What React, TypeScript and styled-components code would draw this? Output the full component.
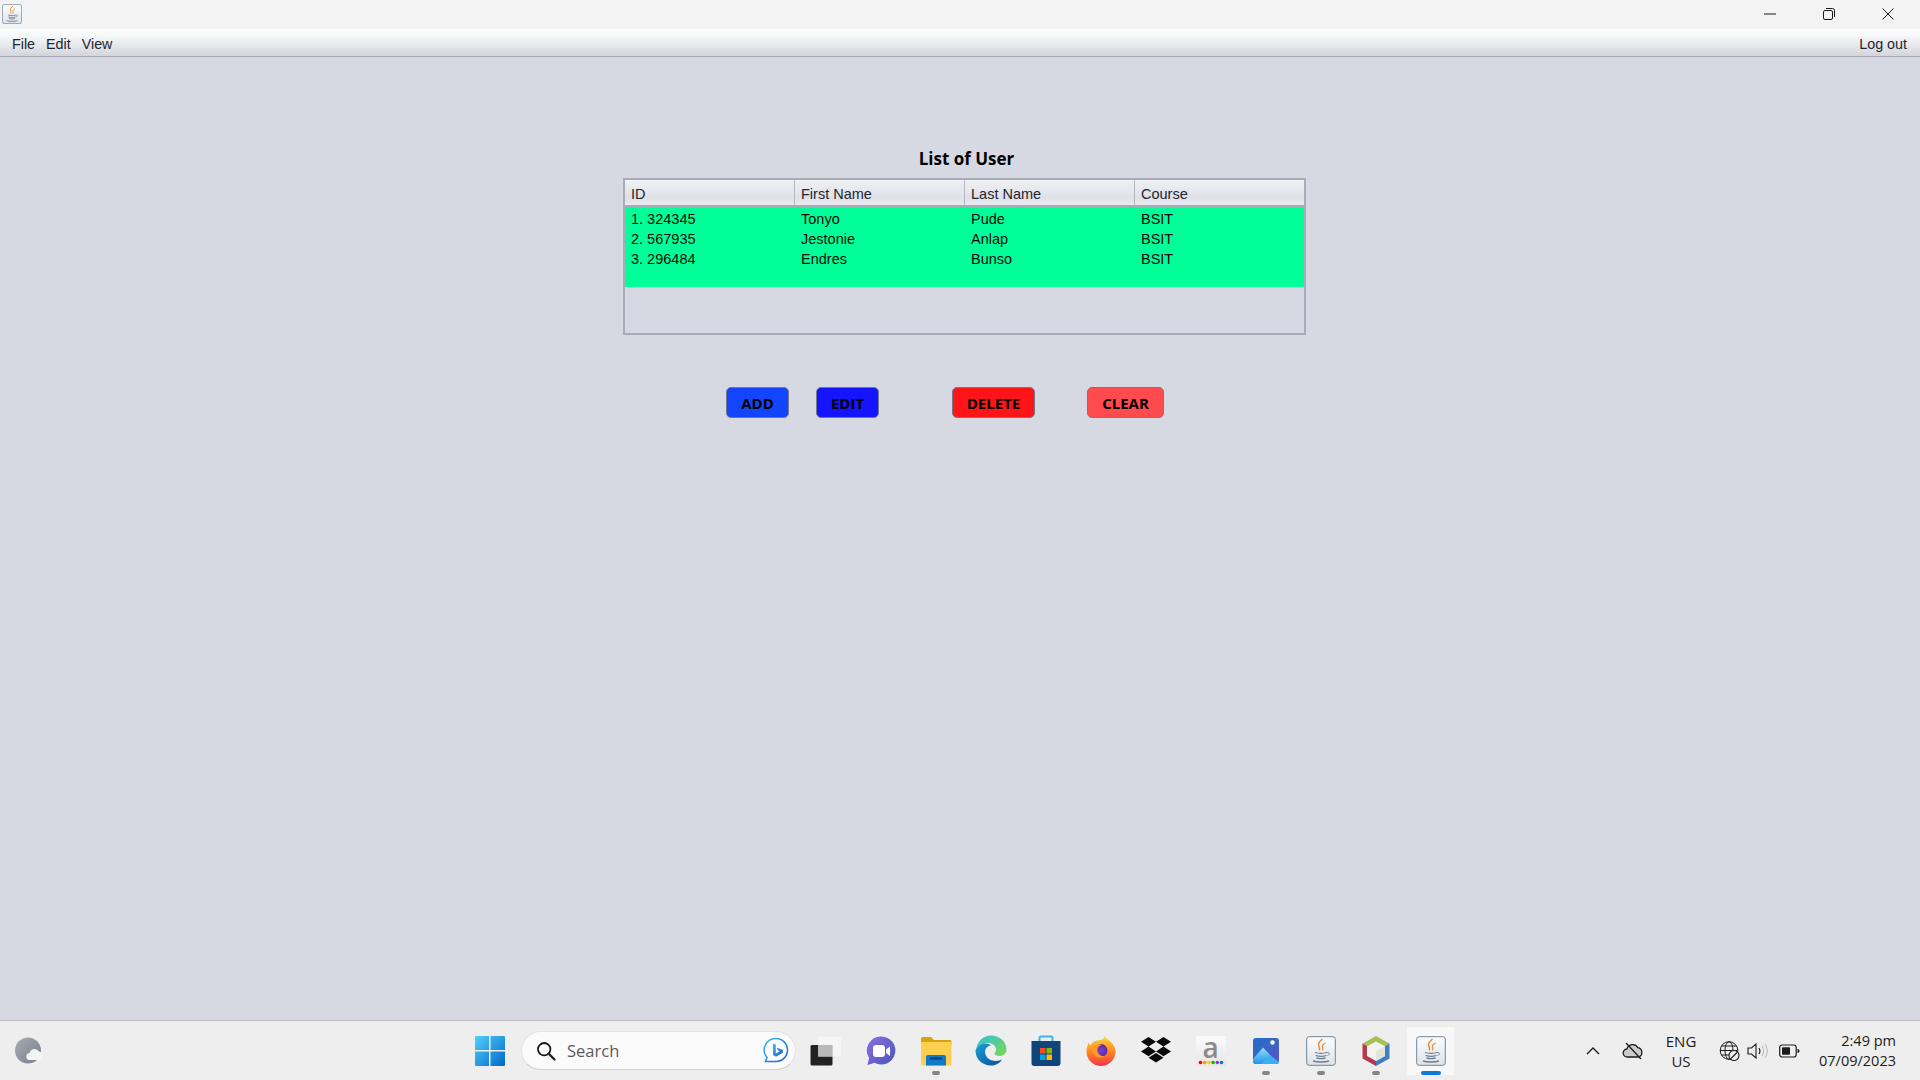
import React from "react";
import styled, { createGlobalStyle } from "styled-components";

const GlobalStyle = createGlobalStyle`
  html, body {
    margin: 0;
    padding: 0;
    height: 100%;
    overflow: hidden;
    background: #d6d9e2;
  }
  * { box-sizing: border-box; }
  #root { height: 100%; }
`;

const users = [
  { id: "1. 324345", first: "Tonyo", last: "Pude", course: "BSIT" },
  { id: "2. 567935", first: "Jestonie", last: "Anlap", course: "BSIT" },
  { id: "3. 296484", first: "Endres", last: "Bunso", course: "BSIT" },
];

const JavaIcon = ({ size }: { size: number }) => (
  <svg width={size} height={size} viewBox="0 0 30 30">
    <defs>
      <linearGradient id={`javabg${size}`} x1="0" y1="0" x2="0" y2="1">
        <stop offset="0" stopColor="#fbfcfd" />
        <stop offset="1" stopColor="#dfe3e8" />
      </linearGradient>
    </defs>
    <rect x="0.7" y="0.7" width="28.6" height="28.6" rx="2.5" fill={`url(#javabg${size})`} stroke="#6f8496" strokeWidth="1" />
    <path d="M16.5 3c-3 3-5 4.500-3.500 7.500.6 1.300 1 2.500.2 3.800" fill="none" stroke="#e98a3a" strokeWidth="1.500" />
    <path d="M19.500 7c-2.500 1.500-4 3-2.800 5 .5 1 .4 1.500-.2 2.300" fill="none" stroke="#e98a3a" strokeWidth="1.200" />
    <path d="M9 16.500c3 1 9 1 12 0M9.500 19.500c3 .9 8 .9 11 0M10.500 22c2.500.7 6.500.7 9 0" fill="none" stroke="#6d7f91" strokeWidth="1.300" />
    <path d="M21 16.500c2.500-.8 3.500 1.800.5 3" fill="none" stroke="#6d7f91" strokeWidth="1" />
    <path d="M7 25c4 1.400 12 1.400 16 0" fill="none" stroke="#6d7f91" strokeWidth="1.400" />
  </svg>
);

const StartIcon = () => (
  <svg width="30" height="30" viewBox="0 0 30 30">
    <defs>
      <linearGradient id="startbg" x1="0" y1="0" x2="1" y2="1">
        <stop offset="0" stopColor="#53cffb" />
        <stop offset="1" stopColor="#0068c8" />
      </linearGradient>
    </defs>
    <path d="M1 0h13v14H0V1a1 1 0 0 1 1-1zM15.500 0H29a1 1 0 0 1 1 1v13H15.500zM0 15.500h14V30H1a1 1 0 0 1-1-1zM15.500 15.500H30V29a1 1 0 0 1-1 1H15.500z" fill="url(#startbg)" />
  </svg>
);

const SearchIcon = () => (
  <svg width="20" height="20" viewBox="0 0 20 20">
    <circle cx="8.200" cy="8.200" r="6.200" fill="none" stroke="#1c1c1c" strokeWidth="1.800" />
    <path d="M12.800 12.800 18.500 18.500" stroke="#1c1c1c" strokeWidth="2.200" strokeLinecap="round" />
  </svg>
);

const BingIcon = () => (
  <svg width="26" height="28" viewBox="0 0 26 28">
    <defs>
      <linearGradient id="bingring" x1="0" y1="0" x2="1" y2="1">
        <stop offset="0" stopColor="#35c1f1" />
        <stop offset="1" stopColor="#1b57d6" />
      </linearGradient>
    </defs>
    <path d="M13 1.500a11.500 11.500 0 0 1 0 23H2.500l1.500-4A11.500 11.500 0 0 1 13 1.500z" fill="#fff" stroke="url(#bingring)" strokeWidth="1.500" />
    <path d="M10 6.500l2.800 1v9l4-2.300-2-1-1-2.500 6 2.100v3l-6.800 4-3-1.800z" fill="url(#bingring)" />
  </svg>
);

const TaskViewIcon = () => (
  <svg width="32" height="30" viewBox="0 0 32 30">
    <rect x="0.500" y="9" width="22" height="20.500" rx="1.500" fill="#222" />
    <rect x="8" y="0.500" width="23" height="20" rx="1" fill="#f7f7f7" fillOpacity="0.85" />
    <rect x="8" y="9" width="14.500" height="11.500" fill="#b9b9b9" />
  </svg>
);

const ChatIcon = () => (
  <svg width="30" height="30" viewBox="0 0 30 30">
    <defs>
      <linearGradient id="chatbg" x1="0" y1="0" x2="1" y2="1">
        <stop offset="0" stopColor="#8a6fe0" />
        <stop offset="1" stopColor="#4d54bd" />
      </linearGradient>
    </defs>
    <path d="M15.500 0.500a14 14 0 1 1-7 26.200L1.500 29l1.600-7A14 14 0 0 1 15.500.500z" fill="url(#chatbg)" />
    <rect x="7" y="9" width="12" height="12" rx="3" fill="#fff" />
    <path d="M20 13.500l4-3v9.500l-4-3z" fill="#fff" />
  </svg>
);

const ExplorerIcon = () => (
  <svg width="32" height="30" viewBox="0 0 32 30">
    <path d="M1 3a2 2 0 0 1 2-2h8l3 3h16a1.500 1.500 0 0 1 1.500 1.500V9H1z" fill="#d9a20c" />
    <path d="M1 6h30.500v22a1.500 1.500 0 0 1-1.500 1.500H3A2 2 0 0 1 1 27.500z" fill="#fdcf4f" />
    <path d="M6 21a2 2 0 0 1 2-2h16a2 2 0 0 1 2 2v8.500H6z" fill="#0d79c9" />
    <rect x="10" y="21.500" width="12" height="2" fill="#0b3f78" />
  </svg>
);

const EdgeIcon = () => (
  <svg width="32" height="32" viewBox="0 0 32 32">
    <defs>
      <linearGradient id="edgea" x1="0" y1="0" x2="1" y2="1">
        <stop offset="0" stopColor="#30c0e0" />
        <stop offset="1" stopColor="#7ed84f" />
      </linearGradient>
      <linearGradient id="edgeb" x1="0" y1="0" x2="1" y2="1">
        <stop offset="0" stopColor="#1aa0d8" />
        <stop offset="1" stopColor="#0a4f9c" />
      </linearGradient>
    </defs>
    <path d="M16 .500c9 0 15.500 6.500 15.500 14 0 4-3 6.500-7 6.500-3 0-5-1-5-2.500 0-1 1.500-1.200 1.500-4 0-4-4-6.500-8-6.500-5 0-9 3-12 7C2 7 7.500.500 16 .500z" fill="url(#edgea)" />
    <path d="M.500 15.500c2-4.500 6-7 10-7 3.500 0 5.500 2 5.500 2-4 .5-6 3.500-6 6.500 0 5 5 9 10.500 9 3 0 5-1 6.500-1.500-2.500 4-7 6-11 6C7 30.500.500 24 .500 15.500z" fill="url(#edgeb)" />
  </svg>
);

const StoreIcon = () => (
  <svg width="30" height="32" viewBox="0 0 30 32">
    <path d="M8.500 6V3a1.500 1.500 0 0 1 1.500-1.500h10A1.500 1.500 0 0 1 21.500 3v3" fill="none" stroke="#3fb4ea" strokeWidth="2" />
    <path d="M0.500 6h29v22a3 3 0 0 1-3 3h-23a3 3 0 0 1-3-3z" fill="#10457c" />
    <rect x="9" y="13" width="5.500" height="5.500" fill="#f25022" />
    <rect x="15.500" y="13" width="5.500" height="5.500" fill="#7fba00" />
    <rect x="9" y="19.500" width="5.500" height="5.500" fill="#00a4ef" />
    <rect x="15.500" y="19.500" width="5.500" height="5.500" fill="#ffb900" />
  </svg>
);

const FirefoxIcon = () => (
  <svg width="30" height="30" viewBox="0 0 30 30">
    <defs>
      <linearGradient id="foxa" x1="0" y1="0" x2="0" y2="1">
        <stop offset="0" stopColor="#ffd83a" />
        <stop offset="0.500" stopColor="#ff8a1f" />
        <stop offset="1" stopColor="#f0364f" />
      </linearGradient>
      <radialGradient id="foxb">
        <stop offset="0" stopColor="#7c3fd0" />
        <stop offset="1" stopColor="#5a2aa8" />
      </radialGradient>
    </defs>
    <path d="M19 0c1 3 4 4 6 6 3 3 4.500 7 4.500 9.500a14.500 14.500 0 0 1-29 0C.500 12 1.500 9 3 6.500c.3 1.500.8 2.300 1.500 3C6 6 9 4.500 12 4.500 14.500 4.500 18 3 19 0z" fill="url(#foxa)" />
    <circle cx="15" cy="14.500" r="6.500" fill="url(#foxb)" />
    <path d="M7 11c3-3 7-3.500 9-2 -3 .5-5 2.500-4.500 6 .5 3 3.500 5.500 7 5-3 2.500-8 2-10.500-1.500C6 15.500 6 13 7 11z" fill="#ff9a24" />
  </svg>
);

const DropboxIcon = () => (
  <svg width="30" height="28" viewBox="0 0 30 28">
    <path d="M7.500 0 15 4.800 7.500 9.600 0 4.800zM22.500 0 30 4.800l-7.500 4.800L15 4.800zM0 14.400l7.500-4.800 7.500 4.800-7.500 4.800zM22.500 9.600l7.500 4.800-7.500 4.800-7.500-4.800zM7.500 20.800l7.500-4.800 7.500 4.800L15 25.600z" fill="#0a0a0a" />
  </svg>
);

const AmazonIcon = () => (
  <AmazonTile>
    <AmazonLetter>a</AmazonLetter>
    <svg width="26" height="5" viewBox="0 0 26 5">
      {["#f00", "#f90", "#fc0", "#0b0", "#93c", "#07e"].map((fill, i) => (
        <circle key={fill} cx={2.5 + i * 4.2} cy="2.500" r="1.800" fill={fill} />
      ))}
    </svg>
  </AmazonTile>
);

const PhotosIcon = () => (
  <svg width="26" height="26" viewBox="0 0 26 26">
    <defs>
      <linearGradient id="photobg" x1="0" y1="0" x2="1" y2="1">
        <stop offset="0" stopColor="#1f6fc4" />
        <stop offset="1" stopColor="#5a55c8" />
      </linearGradient>
      <linearGradient id="photomt" x1="0" y1="0" x2="0" y2="1">
        <stop offset="0" stopColor="#8fe0f8" />
        <stop offset="1" stopColor="#1e96e8" />
      </linearGradient>
    </defs>
    <rect width="26" height="26" rx="3" fill="url(#photobg)" />
    <circle cx="19.500" cy="4.500" r="2.200" fill="#fff" />
    <path d="M0 21 10 9.500 22 22a2 2 0 0 1 0 4H3a3 3 0 0 1-3-3z" fill="url(#photomt)" />
    <path d="M8 26 17 17.500 26 24a2.500 2.500 0 0 1-3 2z" fill="#3bb0ee" />
  </svg>
);

const NetbeansIcon = () => (
  <svg width="28" height="30" viewBox="0 0 28 30">
    <path d="M14 0 27.500 7.500 14 15 .500 7.500z" fill="#a4c15a" />
    <path d="M.500 7.500 14 15v15L.500 22.500z" fill="#b33a50" />
    <path d="M27.500 7.500 14 15v15l13.500-7.500z" fill="#3f7fc2" />
    <path d="M14 5.500 23 10.200v9.800L14 25l-9-5v-9.800z" fill="#f4f4ee" />
    <path d="M14 15 23 10.200v9.800L14 25z" fill="#dfe5da" />
  </svg>
);

const WeatherIcon = () => (
  <svg width="30" height="28" viewBox="0 0 30 28">
    <defs>
      <linearGradient id="moon" x1="0" y1="0" x2="1" y2="1">
        <stop offset="0" stopColor="#a7adb4" />
        <stop offset="1" stopColor="#777e88" />
      </linearGradient>
    </defs>
    <circle cx="14" cy="13.500" r="13" fill="url(#moon)" />
    <path d="M16 23a3.500 3.500 0 0 1-.3-7 5 5 0 0 1 9.300-1.500A4.300 4.300 0 0 1 25 23z" fill="#f2f4f6" />
  </svg>
);

const CloudOffIcon = () => (
  <svg width="22" height="18" viewBox="0 0 22 18">
    <path d="M5.500 15a4 4 0 0 1-.6-8 6 6 0 0 1 11-1.300A4.800 4.800 0 0 1 16.500 15z" fill="#8b8b8b" fillOpacity="0.35" stroke="#1c1c1c" strokeWidth="1.300" />
    <path d="M4 1 19 17" stroke="#1c1c1c" strokeWidth="1.300" />
  </svg>
);

const GlobeIcon = () => (
  <svg width="21" height="20" viewBox="0 0 21 20">
    <circle cx="10" cy="9.500" r="8.800" fill="none" stroke="#1c1c1c" strokeWidth="1" />
    <ellipse cx="10" cy="9.500" rx="4" ry="8.800" fill="none" stroke="#1c1c1c" strokeWidth="1" />
    <path d="M1.200 9.500h17.600M2.500 5h15M2.500 14h15" stroke="#1c1c1c" strokeWidth="1" />
    <circle cx="15" cy="14.500" r="5" fill="#eeeeee" stroke="#1c1c1c" strokeWidth="1.100" />
    <path d="M12 17.500 18 11.500" stroke="#1c1c1c" strokeWidth="1.100" />
  </svg>
);

const VolumeIcon = () => (
  <svg width="21" height="18" viewBox="0 0 21 18">
    <path d="M1 6h3.500L9 2v14l-4.500-4H1z" fill="none" stroke="#1c1c1c" strokeWidth="1.100" />
    <path d="M12 6c1.200 1.800 1.200 4.200 0 6" fill="none" stroke="#1c1c1c" strokeWidth="1.100" />
    <path d="M15 4c2 3 2 7 0 10M18 2c3 4 3 10 0 14" fill="none" stroke="#bbbbbb" strokeWidth="1.100" />
  </svg>
);

const BatteryIcon = () => (
  <svg width="21" height="14" viewBox="0 0 21 14">
    <rect x="0.700" y="1" width="16.500" height="12" rx="2.500" fill="none" stroke="#1c1c1c" strokeWidth="1.200" />
    <rect x="3" y="3.300" width="8" height="7.400" rx="0.800" fill="#1c1c1c" />
    <path d="M18.500 5v4c1.200 0 2-.8 2-2s-.8-2-2-2z" fill="#1c1c1c" />
  </svg>
);

const App = () => {
  return (
    <Screen>
      <GlobalStyle />
      <TitleBar>
        <AppIconBox>
          <JavaIcon size={20} />
        </AppIconBox>
        <WindowControls>
          <WindowButton>
            <svg width="12" height="12" viewBox="0 0 12 12">
              <path d="M0 6h12" stroke="#1a1a1a" strokeWidth="1" />
            </svg>
          </WindowButton>
          <WindowButton>
            <svg width="12" height="12" viewBox="0 0 12 12">
              <rect x="0.500" y="2.500" width="9" height="9" rx="1.500" fill="none" stroke="#1a1a1a" strokeWidth="1" />
              <path d="M3 .500h6.500a2 2 0 0 1 2 2V9" fill="none" stroke="#1a1a1a" strokeWidth="1" />
            </svg>
          </WindowButton>
          <WindowButton>
            <svg width="12" height="12" viewBox="0 0 12 12">
              <path d="M.500.500l11 11M11.500.500l-11 11" stroke="#1a1a1a" strokeWidth="1" />
            </svg>
          </WindowButton>
        </WindowControls>
      </TitleBar>

      <MenuBar>
        <MenuGroup>
          <MenuItem>File</MenuItem>
          <MenuItem>Edit</MenuItem>
          <MenuItem>View</MenuItem>
        </MenuGroup>
        <MenuItem>Log out</MenuItem>
      </MenuBar>

      <Content>
        <Title>List of User</Title>
        <TablePane>
          <HeaderRow>
            <HeaderCell>ID</HeaderCell>
            <HeaderCell>First Name</HeaderCell>
            <HeaderCell>Last Name</HeaderCell>
            <HeaderCell>Course</HeaderCell>
          </HeaderRow>
          <Rows>
            {users.map((user) => (
              <Row key={user.id}>
                <Cell>{user.id}</Cell>
                <Cell>{user.first}</Cell>
                <Cell>{user.last}</Cell>
                <Cell>{user.course}</Cell>
              </Row>
            ))}
          </Rows>
        </TablePane>
        <Actions>
          <ActionButton $bg="#1345ff" $width={63} $before={0}>ADD</ActionButton>
          <ActionButton $bg="#1414ff" $width={63} $before={27}>EDIT</ActionButton>
          <ActionButton $bg="#ff1418" $width={83} $before={73}>DELETE</ActionButton>
          <ActionButton $bg="#ff4a4e" $width={77} $before={52}>CLEAR</ActionButton>
        </Actions>
      </Content>

      <Taskbar>
        <WeatherSlot>
          <WeatherIcon />
        </WeatherSlot>
        <TaskCenter>
          <TaskSlot>
            <StartIcon />
          </TaskSlot>
          <SearchBox>
            <SearchIcon />
            <SearchText>Search</SearchText>
            <BingIcon />
          </SearchBox>
          <TaskSlot>
            <TaskViewIcon />
          </TaskSlot>
          <TaskSlot>
            <ChatIcon />
          </TaskSlot>
          <TaskSlot $running>
            <ExplorerIcon />
          </TaskSlot>
          <TaskSlot>
            <EdgeIcon />
          </TaskSlot>
          <TaskSlot>
            <StoreIcon />
          </TaskSlot>
          <TaskSlot>
            <FirefoxIcon />
          </TaskSlot>
          <TaskSlot>
            <DropboxIcon />
          </TaskSlot>
          <TaskSlot>
            <AmazonIcon />
          </TaskSlot>
          <TaskSlot $running>
            <PhotosIcon />
          </TaskSlot>
          <TaskSlot $running>
            <JavaIcon size={30} />
          </TaskSlot>
          <TaskSlot $running>
            <NetbeansIcon />
          </TaskSlot>
          <TaskSlot $active>
            <JavaIcon size={30} />
          </TaskSlot>
        </TaskCenter>
        <Tray>
          <TrayIconBox $width={56}>
            <svg width="14" height="8" viewBox="0 0 14 8">
              <path d="M1 7l6-6 6 6" fill="none" stroke="#1c1c1c" strokeWidth="1.400" />
            </svg>
          </TrayIconBox>
          <TrayIconBox $width={24}>
            <CloudOffIcon />
          </TrayIconBox>
          <Lang>
            <span>ENG</span>
            <span>US</span>
          </Lang>
          <TrayIconBox $width={24}>
            <GlobeIcon />
          </TrayIconBox>
          <TrayIconBox $width={32}>
            <VolumeIcon />
          </TrayIconBox>
          <TrayIconBox $width={32}>
            <BatteryIcon />
          </TrayIconBox>
          <Clock>
            <span>2:49 pm</span>
            <span>07/09/2023</span>
          </Clock>
        </Tray>
      </Taskbar>
    </Screen>
  );
};

const Screen = styled.div`
  width: 1920px;
  height: 1080px;
  display: flex;
  flex-direction: column;
  background: #d6d9e2;
  font-family: "Liberation Sans", Arial, sans-serif;
`;

const TitleBar = styled.div`
  height: 29px;
  flex-shrink: 0;
  display: flex;
  align-items: flex-start;
  justify-content: space-between;
  background: #f3f3f3;
`;

const AppIconBox = styled.div`
  display: flex;
  padding: 4px 0 0 2px;
`;

const WindowControls = styled.div`
  display: flex;
  padding-right: 3px;
`;

const WindowButton = styled.div`
  width: 59px;
  height: 29px;
  display: flex;
  align-items: center;
  justify-content: center;
  padding-bottom: 2px;
`;

const MenuBar = styled.div`
  height: 28px;
  flex-shrink: 0;
  display: flex;
  align-items: center;
  justify-content: space-between;
  padding: 2px 13px 0 12px;
  background: linear-gradient(#fdfdfe 0%, #f7f8f9 25%, #d3d5db 100%);
  border-bottom: 1px solid #a8abb6;
`;

const MenuGroup = styled.div`
  display: flex;
  gap: 11px;
`;

const MenuItem = styled.span`
  font-size: 14.3px;
  color: #1d2530;
`;

const Content = styled.main`
  flex: 1;
  display: flex;
  flex-direction: column;
  align-items: center;
  padding: 89px 0 0 9px;
`;

const Title = styled.h1`
  margin: 0 0 7px 4px;
  height: 25px;
  line-height: 25px;
  font-family: "Open Sans", sans-serif;
  font-size: 17px;
  font-weight: 700;
  color: #000;
`;

const TablePane = styled.div`
  width: 683px;
  height: 157px;
  border: 2px solid #a9acb7;
  background: #d6d9e2;
`;

const HeaderRow = styled.div`
  height: 27px;
  display: grid;
  grid-template-columns: repeat(4, 170px);
  background: linear-gradient(#f0f1f4 0%, #dfe1e7 70%, #e9ebf1 100%);
  border-bottom: 2px solid #a9acb7;
`;

const HeaderCell = styled.div`
  padding: 5px 0 0 6px;
  font-size: 14.5px;
  line-height: 18px;
  color: #1d2530;
  border-right: 1px solid #b4b7c1;

  &:last-child {
    border-right: 0;
  }
`;

const Rows = styled.div`
  height: 80px;
  padding-top: 2px;
  background: #00ff99;
`;

const Row = styled.div`
  height: 20px;
  display: grid;
  grid-template-columns: repeat(4, 170px);
`;

const Cell = styled.div`
  padding-left: 6px;
  font-size: 14.5px;
  line-height: 20px;
  color: #0a0a0a;
`;

const Actions = styled.div`
  width: 683px;
  display: flex;
  padding: 52px 0 0 103px;
`;

const ActionButton = styled.button<{ $bg: string; $width: number; $before: number }>`
  width: ${(p) => p.$width}px;
  height: 31px;
  margin-left: ${(p) => p.$before}px;
  padding: 0;
  border: 1px solid #73778a;
  border-radius: 5px;
  background: ${(p) => p.$bg};
  font-family: "Open Sans", sans-serif;
  font-size: 15px;
  font-weight: 700;
  color: #000;
`;

const Taskbar = styled.footer`
  height: 60px;
  flex-shrink: 0;
  display: grid;
  grid-template-columns: 462px 1fr auto;
  align-items: center;
  background: #eeeeee;
  border-top: 1px solid #bdbdbd;
`;

const WeatherSlot = styled.div`
  display: flex;
  padding-left: 14px;
  align-items: center;
`;

const TaskCenter = styled.div`
  display: flex;
  align-items: center;
`;

const TaskSlot = styled.div<{ $running?: boolean; $active?: boolean }>`
  position: relative;
  width: 55px;
  height: 48px;
  padding: 0 4px;
  display: flex;
  align-items: center;
  justify-content: center;
  border-radius: 4px;
  background: ${(p) => (p.$active ? "#f8f8f8" : "transparent")};
  background-clip: content-box;

  &::after {
    content: "";
    display: ${(p) => (p.$running || p.$active ? "block" : "none")};
    position: absolute;
    bottom: 0;
    left: 50%;
    width: ${(p) => (p.$active ? "20px" : "8px")};
    height: 4px;
    margin-left: ${(p) => (p.$active ? "-10px" : "-4px")};
    border-radius: 2px;
    background: ${(p) => (p.$active ? "#0a78d4" : "#868686")};
  }
`;

const SearchBox = styled.div`
  width: 275px;
  height: 39px;
  margin: 0 2px 0 4px;
  display: flex;
  align-items: center;
  padding: 0 6px 0 14px;
  background: #fbfbfb;
  border: 1px solid #e2e2e2;
  border-bottom-color: #cfcfcf;
  border-radius: 20px;
`;

const SearchText = styled.span`
  flex: 1;
  padding-left: 11px;
  font-family: "Open Sans", sans-serif;
  font-size: 16.5px;
  color: #5a5a5a;
`;

const AmazonTile = styled.div`
  width: 30px;
  height: 30px;
  display: flex;
  flex-direction: column;
  align-items: center;
  background: linear-gradient(#fbfbfb, #e6e6e6);
`;

const AmazonLetter = styled.span`
  height: 24px;
  line-height: 22px;
  font-family: "Open Sans", sans-serif;
  font-size: 28px;
  font-weight: 600;
  color: #8b8b8b;
`;

const Tray = styled.div`
  display: flex;
  align-items: center;
  padding-right: 24px;
`;

const TrayIconBox = styled.div<{ $width: number }>`
  width: ${(p) => p.$width}px;
  display: flex;
  justify-content: center;
  align-items: center;
`;

const Lang = styled.div`
  width: 72px;
  display: flex;
  flex-direction: column;
  align-items: center;
  font-family: "Open Sans", sans-serif;
  font-size: 15px;
  line-height: 20px;
  color: #1c1c1c;
`;

const Clock = styled.div`
  margin-left: 14px;
  display: flex;
  flex-direction: column;
  align-items: flex-end;
  font-family: "Open Sans", sans-serif;
  font-size: 14.5px;
  line-height: 20px;
  color: #1c1c1c;
`;

export default App;
